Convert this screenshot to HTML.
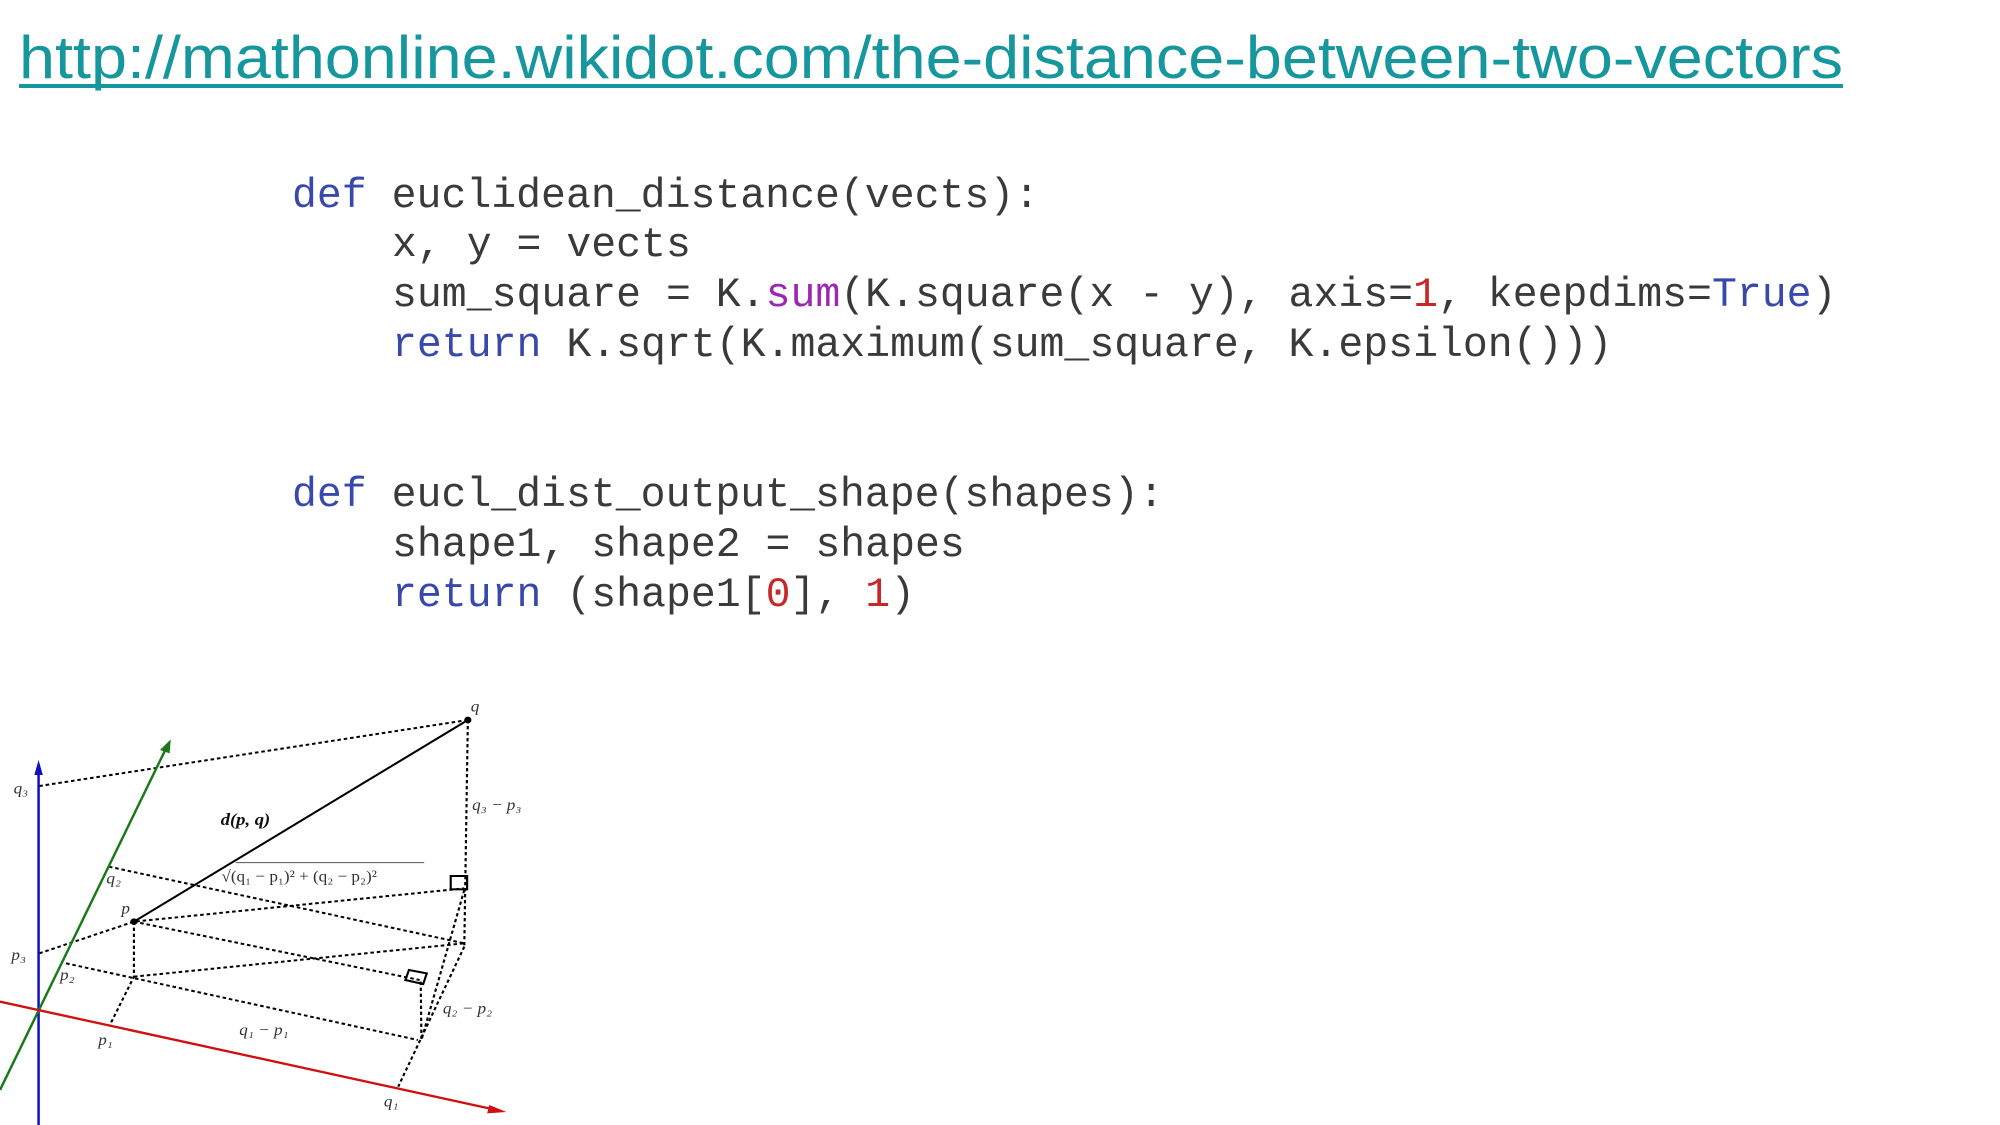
<!DOCTYPE html>
<html><head><meta charset="utf-8"><style>
html,body{margin:0;padding:0;background:#fff;width:2000px;height:1125px;overflow:hidden}
svg{position:absolute;left:0;top:0}
.c{font-family:"Liberation Mono",monospace;font-size:41.5px;fill:#3a3a3a}
.k{fill:#3949ab}.p{fill:#9c27b0}.n{fill:#c62828}
</style></head><body>
<svg width="2000" height="1125" viewBox="0 0 2000 1125">
<text x="19" y="78" font-family="Liberation Sans, sans-serif" font-size="60" fill="#16969d" textLength="1824" lengthAdjust="spacingAndGlyphs">http://mathonline.wikidot.com/the-distance-between-two-vectors</text>
<rect x="19" y="84" width="1824" height="4" fill="#16969d"/>
<g class="c" xml:space="preserve">
<text x="292" y="207"><tspan class="k">def</tspan> euclidean_distance(vects):</text>
<text x="392" y="256">x, y = vects</text>
<text x="392" y="306">sum_square = K.<tspan class="p">sum</tspan>(K.square(x - y), axis=<tspan class="n">1</tspan>, keepdims=<tspan class="k">True</tspan>)</text>
<text x="392" y="356"><tspan class="k">return</tspan> K.sqrt(K.maximum(sum_square, K.epsilon()))</text>
<text x="292" y="506"><tspan class="k">def</tspan> eucl_dist_output_shape(shapes):</text>
<text x="392" y="556">shape1, shape2 = shapes</text>
<text x="392" y="606"><tspan class="k">return</tspan> (shape1[<tspan class="n">0</tspan>], <tspan class="n">1</tspan>)</text>
</g>
</svg>
<svg style="left:0;top:680px" width="560" height="445" viewBox="0 0 1568 1335" preserveAspectRatio="none">
<g stroke="#000" stroke-width="6" stroke-dasharray="10 8" fill="none">
<line x1="110" y1="318" x2="1310" y2="120"/>
<line x1="305" y1="560" x2="1300" y2="790"/>
<polyline points="110,820 375,725 1300,625"/>
<line x1="375" y1="725" x2="1175" y2="900"/>
<polyline points="375,725 375,890 310,1030"/>
<line x1="185" y1="850" x2="1170" y2="1080"/>
<line x1="375" y1="890" x2="1300" y2="790"/>
<line x1="1310" y1="120" x2="1300" y2="800"/>
<line x1="1300" y1="630" x2="1180" y2="1080"/>
<line x1="1300" y1="800" x2="1115" y2="1220"/>
<line x1="1178" y1="905" x2="1180" y2="1080"/>
</g>
<g stroke="#000" stroke-width="6" fill="none">
<line x1="375" y1="725" x2="1310" y2="120"/>
<rect x="1262" y="588" width="46" height="40"/>
<polygon points="1145,870 1195,880 1185,912 1135,900"/>
</g>
<circle cx="375" cy="725" r="10"/><circle cx="1310" cy="120" r="10"/>
<line x1="108" y1="1335" x2="108" y2="270" stroke="#1010c0" stroke-width="7"/>
<polygon points="108,240 96,285 120,285" fill="#1010c0"/>
<line x1="0" y1="1230" x2="465" y2="205" stroke="#1a7a1a" stroke-width="7"/>
<polygon points="478,178 448,210 475,220" fill="#1a7a1a"/>
<line x1="0" y1="965" x2="1390" y2="1290" stroke="#d01010" stroke-width="7"/>
<polygon points="1418,1296 1370,1275 1364,1300" fill="#d01010"/>
<g font-family="Liberation Serif, serif" font-style="italic" font-size="48" fill="#333">
<text x="1318" y="95">q</text>
<text x="38" y="340">q₃</text>
<text x="1322" y="390">q₃ − p₃</text>
<text x="618" y="435" font-weight="bold" font-size="52" fill="#111">d(p, q)</text>
<text x="620" y="605" font-style="normal">√(q₁ − p₁)² + (q₂ − p₂)²</text>
<line x1="660" y1="548" x2="1188" y2="548" stroke="#555" stroke-width="3"/>
<text x="298" y="610">q₂</text>
<text x="340" y="700">p</text>
<text x="32" y="840">p₃</text>
<text x="168" y="900">p₂</text>
<text x="1240" y="1000">q₂ − p₂</text>
<text x="670" y="1065">q₁ − p₁</text>
<text x="275" y="1095">p₁</text>
<text x="1075" y="1280">q₁</text>
</g>
</svg>
</body></html>
